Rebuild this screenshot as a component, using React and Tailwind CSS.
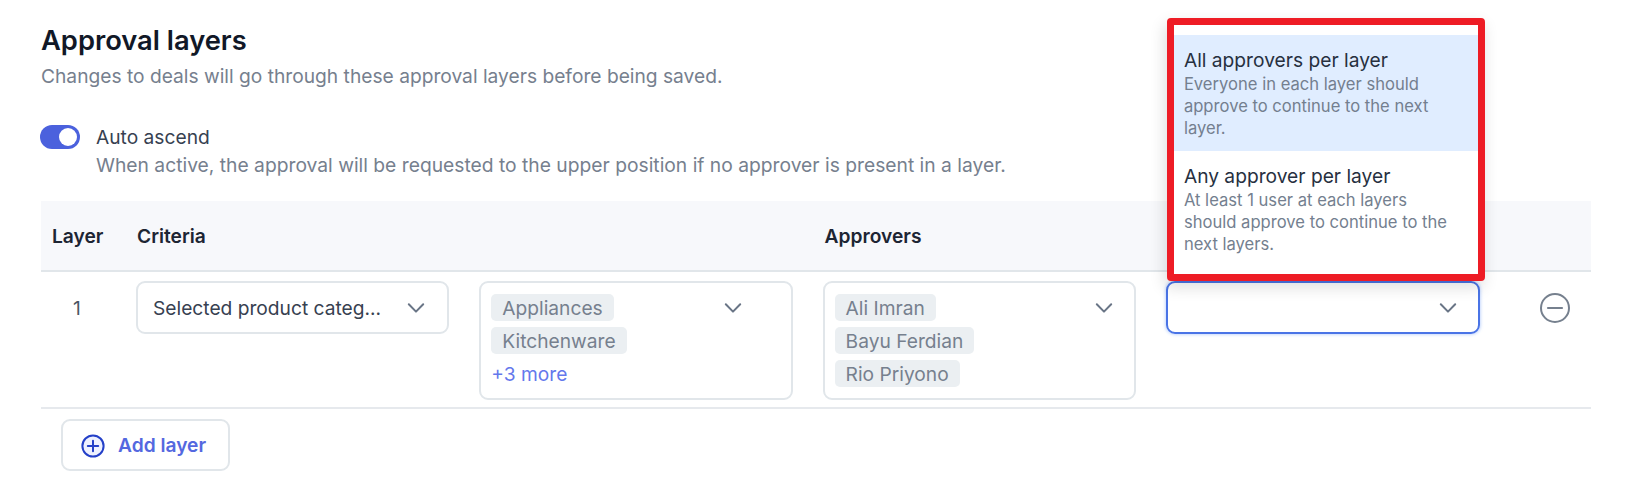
import React, { useState } from 'react';

const layers = [
    {
        id: 1,
        criteria: 'Selected product categ...',
        categories: ['Appliances', 'Kitchenware'],
        more: 3,
        approvers: ['Ali Imran', 'Bayu Ferdian', 'Rio Priyono'],
    },
];

const options = [
    { title: 'All approvers per layer', text: 'Everyone in each layer should approve to continue to the next layer.' },
    { title: 'Any approver per layer', text: 'At least 1 user at each layers should approve to continue to the next layers.' },
];

const Chevron = () => (
    <svg width="18" height="12" viewBox="0 0 18 12" fill="none" className="shrink-0">
        <path d="M1.8 2.2 9 9.6 16.2 2.2" stroke="#697586" strokeWidth="2" strokeLinecap="round" strokeLinejoin="round" />
    </svg>
);

const Chip = ({ children }) => (
    <span className="flex h-[27px] items-center rounded-[5px] bg-[#ebeff2] px-[11px] pt-px text-[#76808e]">{children}</span>
);

const ApprovalMenu = () => (
    <div className="absolute bottom-[51px] -left-px z-10 h-[263px] w-[318px] rounded-[4px] border-[7px] border-[#ee1c25] bg-white pt-[10px] shadow-[-2px_6px_16px_rgba(0,0,0,0.14)]">
        {options.map((option, i) => (
            <div key={option.title} className={i === 0 ? 'h-[116px] bg-[#e0edff] px-[10px] pt-3' : 'px-[10px] pt-3'}>
                <p className="leading-[27px] text-[#27303f]">{option.title}</p>
                <p className="-mt-px w-[270px] text-[16.6px] leading-[22px] text-[#747f8f]">{option.text}</p>
            </div>
        ))}
    </div>
);

export default function App() {
    const [active, setActive] = useState(true);

    return (
        <main className="h-[503px] w-[1631px] overflow-hidden bg-white pt-[21px] pr-10 pl-[41px] font-['Inter',sans-serif] text-[19.2px]">
            <h1 className="text-[27.3px] leading-10 font-semibold text-[#111827]">Approval layers</h1>
            <p className="mt-px leading-7 text-[#76808e]">Changes to deals will go through these approval layers before being saved.</p>

            <section className="mt-[34px] -ml-px flex gap-4">
                <button
                    onClick={() => setActive(!active)}
                    className={active
                        ? 'mt-px flex h-6 w-10 items-center justify-end rounded-full bg-[#4b61dd] px-[3px]'
                        : 'mt-px flex h-6 w-10 items-center justify-start rounded-full bg-gray-300 px-[3px]'}
                >
                    <span className="h-[18px] w-[18px] rounded-full bg-white" />
                </button>
                <div>
                    <p className="leading-[26px] text-[#374151]">Auto ascend</p>
                    <p className="text-[19.25px] leading-[30px] text-[#76808e]">When active, the approval will be requested to the upper position if no approver is present in a layer.</p>
                </div>
            </section>

            <section className="mt-[21px]">
                <div className="grid h-[71px] grid-cols-[95px_343.3px_343.3px_343.3px_343.3px_1fr] items-center border-b-2 border-[#e1e6ea] bg-[#f7f8fb] pt-px font-semibold text-[#1d2533]">
                    <span className="pl-[11px]">Layer</span>
                    <span className="pl-px">Criteria</span>
                    <span />
                    <span className="pl-[2px]">Approvers</span>
                </div>

                {layers.map(layer => (
                    <div key={layer.id} className="grid h-[137px] grid-cols-[95px_343.3px_343.3px_343.3px_343.3px_1fr] items-start border-b-2 border-[#e6e9ed] pt-[9px]">
                        <span className="pl-8 leading-[54px] text-[#4b5563]">{layer.id}</span>
                        <div className="mr-[30px] flex h-[53px] items-center justify-between rounded-[9px] border-2 border-[#e1e6ea] pr-[22px] pl-[15px] text-[#374151]">
                            <span className="pt-px">{layer.criteria}</span>
                            <Chevron />
                        </div>
                        <div className="mr-[30px] flex h-[119px] items-start justify-between rounded-[9px] border-2 border-[#e1e6ea] pt-[11px] pr-[49px] pl-[10px]">
                            <div className="flex flex-col items-start gap-[6px]">
                                {layer.categories.map(name => <Chip key={name}>{name}</Chip>)}
                                <a className="leading-7 text-[#6478ec]">+{layer.more} more</a>
                            </div>
                            <span className="mt-[7.5px] flex"><Chevron /></span>
                        </div>
                        <div className="mr-[30px] flex h-[119px] items-start justify-between rounded-[9px] border-2 border-[#e1e6ea] pt-[11px] pr-[21px] pl-[10px]">
                            <div className="flex flex-col items-start gap-[6px]">
                                {layer.approvers.map(name => <Chip key={name}>{name}</Chip>)}
                            </div>
                            <span className="mt-[7.5px] flex"><Chevron /></span>
                        </div>
                        <div className="relative mr-[29.5px] flex h-[53px] items-center justify-end rounded-[9px] border-2 border-[#4a74e6] pr-[21px] shadow-[0_0_3px_1px_rgba(96,150,250,0.35)]">
                            <Chevron />
                            <ApprovalMenu />
                        </div>
                        <svg width="32" height="32" viewBox="0 0 32 32" fill="none" stroke="#76808e" strokeWidth="2" className="mt-[10.5px] ml-[30.3px]">
                            <circle cx="16" cy="16" r="14" />
                            <path d="M9 16h14" strokeWidth="2.2" strokeLinecap="round" />
                        </svg>
                    </div>
                ))}

                <button className="mt-[10px] ml-5 flex h-[52px] w-[169px] items-center rounded-[9px] border-2 border-[#e1e6ea] pt-px pl-[18px] font-semibold text-[#5468e0]">
                    <svg width="24" height="24" viewBox="0 0 24 24" fill="none" stroke="#2440c8" strokeWidth="2" className="mr-[13px]">
                        <circle cx="12" cy="12" r="10.6" fill="#eef1ff" />
                        <path d="M12 6.8v10.4M6.8 12h10.4" strokeLinecap="round" />
                    </svg>
                    Add layer
                </button>
            </section>
        </main>
    );
}
